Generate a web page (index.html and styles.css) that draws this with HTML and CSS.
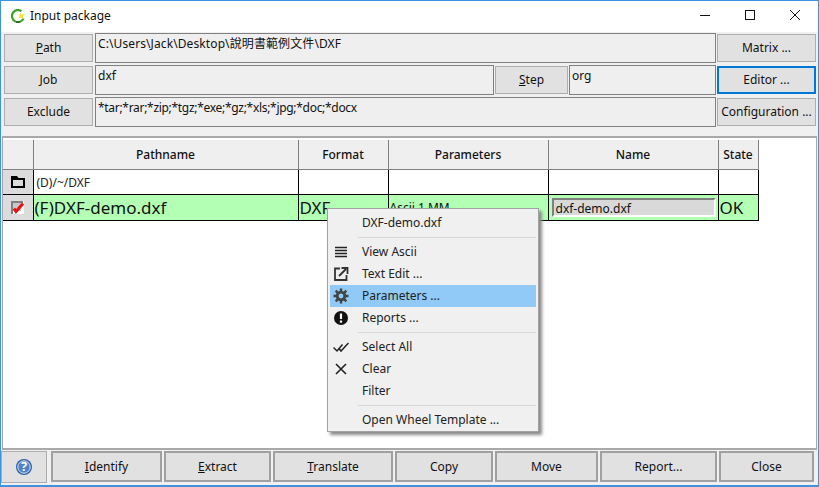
FILE: index.html
```html
<!DOCTYPE html>
<html>
<head>
    <meta charset="UTF-8">
    <title>Input package</title>
    <link rel="stylesheet" href="styles.css">
</head>
<body>
<div class="window">
    <div class="titlebar">
        <svg class="app-icon" width="14" height="14" viewBox="0 0 14 14">
            <path d="M10.500 2.200A6 6 0 1 0 12.500 9.500" fill="none" stroke="#3aa526" stroke-width="2.200"/>
            <path d="M5 13h4" stroke="#333" stroke-width="1"/>
            <path d="M9 3.500l1.300 2 3.700-0.500-2.200 2.200 1.200 3-3-1.700-2.500 1 1-3z" fill="#efe62a"/>
        </svg>
        <span class="title">Input package</span>
        <div class="win-buttons">
            <svg width="10" height="10" viewBox="0 0 10 10"><path d="M0 5.500h10" stroke="#111" fill="none"/></svg>
            <svg width="10" height="10" viewBox="0 0 10 10"><rect x="0.500" y="0.500" width="9" height="9" stroke="#111" fill="none"/></svg>
            <svg width="10" height="10" viewBox="0 0 10 10"><path d="M0 0l10 10M10 0L0 10" stroke="#111" fill="none"/></svg>
        </div>
    </div>

    <div class="form">
        <div class="form-row">
            <button class="btn btn-side"><u>P</u>ath</button>
            <div class="field field-grow field-wide">C:\Users\Jack\Desktop\說明書範例文件\DXF</div>
            <button class="btn btn-right">Matrix ...</button>
        </div>
        <div class="form-row">
            <button class="btn btn-side"><u>J</u>ob</button>
            <div class="field field-grow">dxf</div>
            <button class="btn btn-step"><u>S</u>tep</button>
            <div class="field field-step">org</div>
            <button class="btn btn-right btn-focus">Editor ...</button>
        </div>
        <div class="form-row">
            <button class="btn btn-side">Exclude</button>
            <div class="field field-grow field-tight">*tar;*rar;*zip;*tgz;*exe;*gz;*xls;*jpg;*doc;*docx</div>
            <button class="btn btn-right">Configuration ...</button>
        </div>
    </div>

    <div class="panel">
        <table class="files">
            <colgroup>
                <col class="c-mark"><col class="c-path"><col class="c-format"><col class="c-params"><col class="c-name"><col class="c-state">
            </colgroup>
            <thead>
                <tr><th></th><th>Pathname</th><th>Format</th><th>Parameters</th><th>Name</th><th>State</th></tr>
            </thead>
            <tbody>
                <tr class="row-dir">
                    <td class="mark">
                        <svg width="14" height="12" viewBox="0 0 14 12"><path d="M0 0h6l1.500 2h6.500v10h-14z" fill="#000"/><rect x="2" y="4" width="10" height="6" fill="#dcdcdc"/></svg>
                    </td>
                    <td>(D)/~/DXF</td><td></td><td></td><td></td><td></td>
                </tr>
                <tr class="row-file">
                    <td class="mark">
                        <svg class="check" width="13" height="13" viewBox="0 0 13 13">
                            <rect width="13" height="13" fill="#fff"/>
                            <path d="M1 13V1h11" fill="none" stroke="#808080" stroke-width="2"/>
                            <rect x="2" y="2" width="8" height="8" fill="#c8c8c8"/>
                            <path d="M3 7.500l2 3 7-8" fill="none" stroke="#ee0f0f" stroke-width="3"/>
                        </svg>
                    </td>
                    <td>(F)DXF-demo.dxf</td>
                    <td>DXF</td>
                    <td class="params">Ascii 1 MM</td>
                    <td class="name-cell"><div class="name-input">dxf-demo.dxf</div></td>
                    <td>OK</td>
                </tr>
            </tbody>
        </table>

        <div class="menu">
            <div class="menu-item">DXF-demo.dxf</div>
            <div class="menu-sep"></div>
            <div class="menu-item">
                <svg class="menu-icon" width="16" height="16" viewBox="0 0 16 16"><path d="M2 3.500h12M2 6.500h12M2 9.500h12M2 12.500h12" stroke="#222" stroke-width="1.500" fill="none"/></svg>
                View Ascii
            </div>
            <div class="menu-item">
                <svg class="menu-icon" width="16" height="16" viewBox="0 0 16 16"><path d="M7 2.500H2v11.500h11.500V9" fill="none" stroke="#333" stroke-width="1.800"/><path d="M6 10l7-7M8.500 2h6v6" fill="none" stroke="#333" stroke-width="1.800"/></svg>
                Text Edit ...
            </div>
            <div class="menu-item active">
                <svg class="menu-icon" width="16" height="16" viewBox="0 0 16 16"><circle cx="8" cy="8" r="3.800" fill="none" stroke="#444" stroke-width="2.800"/><path d="M8 0.500v3M8 12.500v3M0.500 8h3M12.500 8h3M2.700 2.700l2.100 2.100M11.200 11.200l2.100 2.100M13.300 2.700l-2.100 2.100M4.800 11.200l-2.100 2.100" stroke="#444" stroke-width="2.400" fill="none"/></svg>
                Parameters ...
            </div>
            <div class="menu-item">
                <svg class="menu-icon" width="16" height="16" viewBox="0 0 16 16"><circle cx="8" cy="8" r="7" fill="#111"/><path d="M8 3.500v5.500" stroke="#fff" stroke-width="2.200"/><path d="M8 10.500v2.200" stroke="#fff" stroke-width="2.200"/></svg>
                Reports ...
            </div>
            <div class="menu-sep"></div>
            <div class="menu-item">
                <svg class="menu-icon" width="16" height="16" viewBox="0 0 16 16"><path d="M0.500 8.500l3.500 3.500 5.500-6.500M5.500 9l2.500 3 7.500-8" fill="none" stroke="#222" stroke-width="1.500"/></svg>
                Select All
            </div>
            <div class="menu-item">
                <svg class="menu-icon" width="16" height="16" viewBox="0 0 16 16"><path d="M3 3l10 10M13 3L3 13" stroke="#222" stroke-width="1.600" fill="none"/></svg>
                Clear
            </div>
            <div class="menu-item">Filter</div>
            <div class="menu-sep"></div>
            <div class="menu-item">Open Wheel Template ...</div>
        </div>
    </div>

    <div class="actions">
        <button class="btn help">
            <svg width="18" height="18" viewBox="0 0 18 18">
                <circle cx="9" cy="9" r="8" fill="#2f5fa8"/>
                <circle cx="9" cy="9" r="6.200" fill="#4f82c8" stroke="#dbe6f5" stroke-width="1"/>
                <text x="9" y="13.200" class="help-mark">?</text>
            </svg>
        </button>
        <button class="btn act a-identify"><u>I</u>dentify</button>
        <button class="btn act a-extract"><u>E</u>xtract</button>
        <button class="btn act a-translate"><u>T</u>ranslate</button>
        <button class="btn act a-copy">Copy</button>
        <button class="btn act a-move">Move</button>
        <button class="btn act a-report">Report...</button>
        <button class="btn act a-close">Close</button>
    </div>
</div>
</body>
</html>
```

FILE: styles.css
```css
html, body {
    margin: 0;
    padding: 0;
}

body {
    width: 819px;
    height: 487px;
    overflow: hidden;
    font-family: "Noto Sans", "Noto Sans CJK TC", sans-serif;
    font-size: 12px;
    color: #111;
}

.window {
    box-sizing: border-box;
    width: 819px;
    height: 487px;
    display: flex;
    flex-direction: column;
    background-color: #f0f0f0;
    border: 1px solid #3a94e0;
    border-bottom-width: 2px;
}

.titlebar {
    height: 31px;
    flex: none;
    display: flex;
    align-items: center;
    background-color: #fff;
    padding-left: 10px;
}

.app-icon {
    margin: 0 5px 2px 0;
}

.title {
    font-size: 12px;
    padding-bottom: 2px;
}

.win-buttons {
    margin-left: auto;
    display: flex;
    gap: 35px;
    padding: 0 18px 3px 0;
}

.form {
    height: 104px;
    flex: none;
    box-sizing: border-box;
    padding: 1px 2px 0 3px;
    display: flex;
    flex-direction: column;
    gap: 2px;
}

.form-row {
    display: flex;
    height: 30px;
    gap: 1px;
}

.btn {
    box-sizing: border-box;
    font: inherit;
    color: #111;
    background-color: #e1e1e1;
    border: 1px solid #adadad;
    padding: 0 0 2px;
}

.btn-side {
    width: 89px;
    flex: none;
    margin: 1px 1px 1px 0;
}

.btn-right {
    width: 99px;
    flex: none;
    margin: 1px 0;
}

.btn-focus {
    border: 2px solid #0078d7;
}

.btn-step {
    width: 73px;
    flex: none;
    margin: 1px 0;
}

.field {
    box-sizing: border-box;
    background-color: #efefef;
    border: 1px solid #808080;
    padding: 2px 1px 2px 2px;
    line-height: 16px;
}

.field-grow {
    flex: 1;
}

.field-wide {
    letter-spacing: 0.1px;
}

.field-tight {
    letter-spacing: -0.3px;
}

.field-step {
    width: 147px;
    flex: none;
}

.panel {
    position: relative;
    flex: 1;
    background-color: #fff;
    border: 1px solid #a9a9a9;
    border-width: 2px 1px;
    margin: 0 1px;
    padding: 2px 0 0 0;
}

.files {
    border-collapse: collapse;
    table-layout: fixed;
    width: 755px;
}

.c-mark { width: 30px; }
.c-path { width: 265px; }
.c-format { width: 90px; }
.c-params { width: 160px; }
.c-name { width: 170px; }
.c-state { width: 40px; }

.files th {
    height: 29px;
    padding: 0;
    font-weight: 500;
    font-size: 12px;
    background-color: #efefef;
    border-right: 1px solid #808080;
    border-bottom: 1px solid #808080;
    border-left: 1px solid #808080;
}

.files th:first-child {
    border-left: none;
}

.files td {
    box-sizing: border-box;
    padding: 0 1px;
    border: 1px solid #000;
    overflow: hidden;
    white-space: nowrap;
}

.row-dir td {
    height: 25px;
    font-size: 12px;
    padding-left: 3px;
    color: #222;
}

.row-file td {
    height: 26px;
    font-size: 17px;
    background-color: #b3ffb3;
}

.files td.mark {
    background-color: #dcdcdc;
    text-align: center;
    padding: 0;
    border-left: none;
    line-height: 0;
}

.files .params {
    font-size: 12px;
}

.files .name-cell {
    padding: 2px 2px 3px 3px;
}

.name-input {
    box-sizing: border-box;
    height: 19px;
    line-height: 17px;
    font-size: 12px;
    padding-left: 2px;
    background-color: #d9d9d9;
    border-top: 2px solid #808080;
    border-left: 2px solid #808080;
    border-right: 2px solid #fff;
    border-bottom: 2px solid #fff;
}

.menu {
    position: absolute;
    left: 324px;
    top: 70px;
    box-sizing: border-box;
    width: 212px;
    height: 224px;
    padding: 3px 2px;
    background-color: #f0f0f0;
    border: 1px solid #a0a0a0;
    box-shadow: 3px 3px 3px #8c8c8c;
}

.menu-item {
    position: relative;
    height: 22px;
    line-height: 22px;
    padding-left: 32px;
    color: #222;
}

.menu-item.active {
    background-color: #91c9f7;
}

.menu-icon {
    position: absolute;
    left: 3px;
    top: 3px;
}

.menu-sep {
    height: 1px;
    margin: 3px 0 3px 28px;
    background-color: #d7d7d7;
}

.actions {
    height: 35px;
    flex: none;
    display: flex;
    padding: 1px 3px 2px 0;
    box-sizing: border-box;
}

.help {
    width: 46px;
    margin-right: 2px;
    padding: 0;
    background-color: #e1e1e1;
    border: 1px solid #adadad;
    line-height: 0;
}

.help-mark {
    font-size: 13px;
    font-weight: 700;
    text-anchor: middle;
    fill: #fff;
}

.act {
    border: 2px solid #a0a0a0;
    margin: 0 0 1px 2px;
    padding: 0;
}

.a-identify { width: 111px; }
.a-extract { width: 107px; }
.a-translate { width: 120px; }
.a-copy { width: 98px; }
.a-move { width: 103px; }
.a-report { width: 117px; }
.a-close { width: 95px; }
```
